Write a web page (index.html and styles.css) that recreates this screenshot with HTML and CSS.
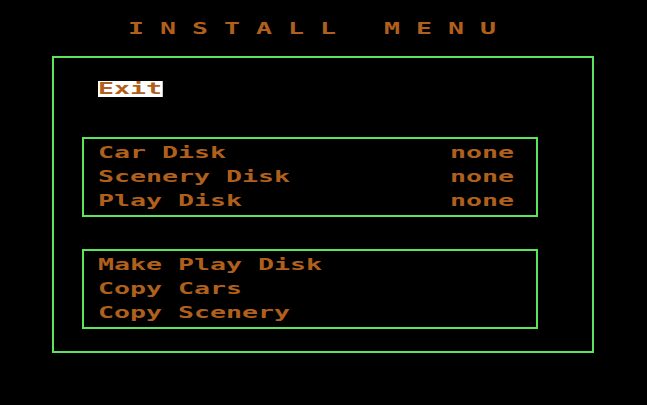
FILE: index.html
```html
<!DOCTYPE html>
<html lang="en">
<head>
    <meta charset="UTF-8">
    <title>INSTALL MENU</title>
    <link rel="stylesheet" href="styles.css">
</head>
<body>
    <div class="title"><span class="wide">I N S T A L L   M E N U</span></div>

    <div class="menu">
        <div class="exit-row wide"><span class="exit">Exit</span></div>

        <div class="group">
            <div class="row wide"><span>Car Disk</span><span>none</span></div>
            <div class="row wide"><span>Scenery Disk</span><span>none</span></div>
            <div class="row wide"><span>Play Disk</span><span>none</span></div>
        </div>

        <div class="group">
            <div class="row wide"><span>Make Play Disk</span></div>
            <div class="row wide"><span>Copy Cars</span></div>
            <div class="row wide"><span>Copy Scenery</span></div>
        </div>
    </div>
</body>
</html>
```

FILE: styles.css
```css
body {
    margin: 0;
    padding: 17px 0 0;
    background: #000;
    color: #b0601c;
    font-family: 'DejaVu Sans Mono', 'Liberation Mono', monospace;
    font-size: 16px;
    font-weight: bold;
    line-height: 24px;
}
/* 8x8 style cells are 16px wide on screen */
.wide {
    display: block;
    width: max-content;
    transform: scaleX(1.661);
    transform-origin: left center;
    white-space: pre;
}
.title {
    margin-left: 128px;
    height: 24px;
}
.menu {
    box-sizing: border-box;
    margin: 15px 0 0 52px;
    width: 542px;
    height: 297px;
    border: 2px solid #5ee35e;
    padding: 23px 0 0 28px;
}
.exit-row {
    margin-left: 16px;
    height: 16px;
    line-height: 16px;
}
.exit {
    display: inline-block;
    width: 4ch;
    height: 16px;
    background: #fff;
    color: #b0601c;
}
.group {
    box-sizing: border-box;
    width: 456px;
    height: 80px;
    border: 2px solid #5ee35e;
    padding: 2px 0 0 14px;
    margin-top: 40px;
}
.group + .group {
    margin-top: 32px;
}
.row {
    display: flex;
    justify-content: space-between;
    width: 26ch;
    height: 24px;
}
```
